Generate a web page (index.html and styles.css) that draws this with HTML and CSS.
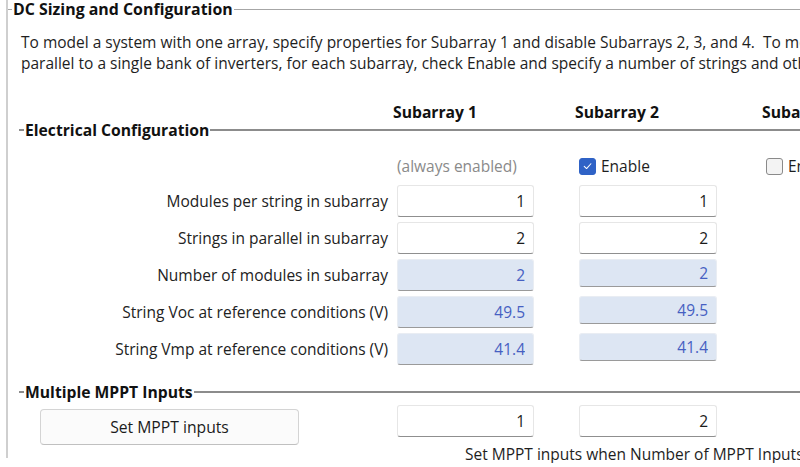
FILE: index.html
```html
<!DOCTYPE html>
<html lang="en">
<head>
<meta charset="utf-8">
<title>DC Sizing and Configuration</title>
<link rel="stylesheet" href="styles.css">
</head>
<body>
<div class="panel">
  <div class="group-title outer-title"><span class="title-text">DC Sizing and Configuration</span></div>
  <div class="desc">
    <p>To model a system with one array, specify properties for Subarray 1 and disable Subarrays 2, 3, and 4.&nbsp; To model a system with multiple arrays</p>
    <p>parallel to a single bank of inverters, for each subarray, check Enable and specify a number of strings and other properties.</p>
  </div>

  <div class="row headers">
    <div></div>
    <div class="col-head">Subarray 1</div>
    <div class="col-head">Subarray 2</div>
    <div class="col-head">Subarray 3</div>
  </div>

  <div class="group-title section-title"><span class="title-text">Electrical Configuration</span></div>

  <div class="row enable-row">
    <div></div>
    <div class="muted">(always enabled)</div>
    <div class="check"><span class="box checked"><svg viewBox="0 0 16 16" width="16" height="16"><path d="M4.5 8.3 L7 10.7 L11.6 5.6" fill="none" stroke="#fff" stroke-width="1.1" stroke-linecap="round" stroke-linejoin="round"/></svg></span><span>Enable</span></div>
    <div class="check"><span class="box"></span><span>Enable</span></div>
  </div>

  <div class="fields">
    <div class="row field-row">
      <div class="label">Modules per string in subarray</div>
      <div class="cell"><input class="field" type="text" value="1" readonly></div>
      <div class="cell"><input class="field wide" type="text" value="1" readonly></div>
      <div></div>
    </div>
    <div class="row field-row">
      <div class="label">Strings in parallel in subarray</div>
      <div class="cell"><input class="field" type="text" value="2" readonly></div>
      <div class="cell"><input class="field wide" type="text" value="2" readonly></div>
      <div></div>
    </div>
    <div class="row field-row">
      <div class="label">Number of modules in subarray</div>
      <div class="cell"><input class="field calc" type="text" value="2" readonly></div>
      <div class="cell"><input class="field calc wide short" type="text" value="2" readonly></div>
      <div></div>
    </div>
    <div class="row field-row">
      <div class="label">String Voc at reference conditions (V)</div>
      <div class="cell"><input class="field calc" type="text" value="49.5" readonly></div>
      <div class="cell"><input class="field calc wide short" type="text" value="49.5" readonly></div>
      <div></div>
    </div>
    <div class="row field-row">
      <div class="label">String Vmp at reference conditions (V)</div>
      <div class="cell"><input class="field calc" type="text" value="41.4" readonly></div>
      <div class="cell"><input class="field calc wide short" type="text" value="41.4" readonly></div>
      <div></div>
    </div>
  </div>

  <div class="group-title section-title mppt-title"><span class="title-text">Multiple MPPT Inputs</span></div>

  <div class="row mppt-row">
    <div class="btn-cell"><button class="btn" type="button">Set MPPT inputs</button></div>
    <div class="cell"><input class="field" type="text" value="1" readonly></div>
    <div class="cell"><input class="field wide" type="text" value="2" readonly></div>
    <div></div>
  </div>
  <div class="note">Set MPPT inputs when Number of MPPT Inputs is greater than one.</div>
</div>
</body>
</html>
```

FILE: styles.css
```css
html, body {
  margin: 0;
  padding: 0;
  background: #ffffff;
}
body {
  width: 800px;
  height: 467px;
  overflow: hidden;
  font-family: "Open Sans", "Noto Sans", "Liberation Sans", sans-serif;
  font-size: 15.5px;
  color: #1e1e1e;
}
p { margin: 0; }

.panel {
  margin-left: 6px;
  margin-top: 9px;
  border-left: 2px solid #cfcfcf;
  height: 458px;
  box-sizing: border-box;
}

.group-title {
  display: flex;
  align-items: center;
  height: 18px;
  line-height: 18px;
  font-weight: 700;
  font-size: 15.9px;
  color: #111;
  white-space: nowrap;
}
.group-title::before {
  content: "";
  width: 4px;
  border-top: 1px solid #a6a6a6;
}
.group-title::after {
  content: "";
  flex: 1;
  border-top: 1px solid #a6a6a6;
}
.title-text {
  padding: 0 1px;
}
.outer-title {
  margin-top: -9px;
}
.section-title {
  margin-left: 11px;
  font-size: 15.7px;
}
.section-title::before,
.section-title::after {
  border-top: 2px solid #8c8c8c;
}
.section-title::before { width: 5px; }

.desc {
  margin-top: 14px;
  padding-left: 13px;
  line-height: 21px;
  white-space: nowrap;
  overflow: hidden;
}

.row {
  display: grid;
  grid-template-columns: 389px 182px 187px 1fr;
  align-items: center;
}
.headers {
  margin-top: 29px;
  height: 18px;
  line-height: 18px;
}
.col-head {
  font-weight: 700;
  font-size: 15.7px;
  margin-left: -4px;
  white-space: nowrap;
  color: #111;
}

.enable-row {
  margin-top: 16px;
  height: 22px;
  white-space: nowrap;
}
.muted {
  color: #8a8a8a;
}
.check {
  display: flex;
  align-items: center;
  gap: 5px;
}
.box {
  width: 17px;
  height: 17px;
  box-sizing: border-box;
  border-radius: 3px;
  border: 1px solid #8a8a8a;
  background: #f3f3f3;
  display: flex;
  align-items: center;
  justify-content: center;
}
.box.checked {
  background: #2f62c6;
  border-color: #2f62c6;
}

.fields {
  margin-top: 8px;
  display: flex;
  flex-direction: column;
  gap: 5px;
}
.field-row {
  height: 32px;
  align-items: start;
}
.label {
  text-align: right;
  padding-right: 9px;
  line-height: 32px;
  color: #222;
  white-space: nowrap;
}
.field {
  display: block;
  box-sizing: border-box;
  width: 137px;
  height: 32px;
  margin: 0;
  padding: 0 8px 0 6px;
  border: 1px solid #e6e6e6;
  border-bottom: 1px solid #8f8f8f;
  border-radius: 3px;
  background: #ffffff;
  font-family: inherit;
  font-size: 15.5px;
  color: #1b1b1b;
  text-align: right;
  outline: none;
}
.field.wide { width: 138px; }
.field.calc {
  background: #dde6f3;
  color: #4660c2;
  border-color: #e9edf3;
  border-bottom-color: #9a9a9a;
}
.field.short { height: 28px; }

.mppt-title {
  margin-top: 18px;
}
.mppt-row {
  margin-top: 4px;
  height: 40px;
  align-items: start;
}
.btn-cell {
  padding-left: 32px;
  padding-top: 4px;
}
.btn {
  display: block;
  width: 259px;
  height: 36px;
  margin: 0;
  border: 1px solid #d4d4d4;
  border-bottom-color: #c0c0c0;
  border-radius: 4px;
  background: #fbfbfb;
  font-family: inherit;
  font-size: 15.7px;
  color: #1b1b1b;
}
.note {
  padding-left: 457px;
  line-height: 18px;
  white-space: nowrap;
  overflow: hidden;
}
```
